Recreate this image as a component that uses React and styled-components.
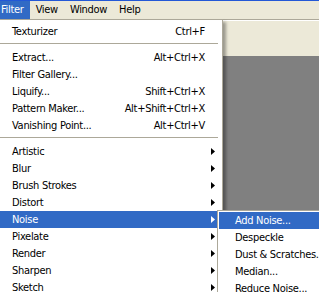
import React from "react";
import styled, { createGlobalStyle } from "styled-components";

const Global = createGlobalStyle`
  html, body { margin: 0; padding: 0; overflow: hidden; }
  body {
    width: 319px; height: 292px;
    background: #ece9d8;
    font-family: "DejaVu Sans Condensed", "DejaVu Sans", sans-serif;
    font-size: 11px;
    letter-spacing: -0.3px;
    color: #000;
  }
`;

const Screen = styled.div`
  position: relative;
  width: 319px;
  height: 292px;
  overflow: hidden;
  border-top: 1px solid #2358d6;
  box-sizing: border-box;
  display: flex;
  flex-direction: column;
`;

const MenuBar = styled.div`
  display: flex;
  height: 18px;
  margin-left: -5px;
  background: #ece9d8;
`;

const BarItem = styled.div`
  display: flex;
  align-items: center;
  padding: 0 6px;
  height: 18px;
  background: ${(p) => (p.$active ? "#316ac5" : "transparent")};
  color: ${(p) => (p.$active ? "#fff" : "#000")};
  line-height: 18px;
`;

const OptionsBar = styled.div`
  height: 36px;
  border-top: 1px solid #aca899;
  box-shadow: inset 0 1px 0 #fff;
  background: #ece9d8;
`;

const Canvas = styled.div`
  flex: 1;
  background: #808080;
`;

const Dropdown = styled.div`
  position: absolute;
  top: 18px;
  left: -3px;
  width: 226px;
  box-sizing: border-box;
  background: #fff;
  border: 1px solid #aca899;
  padding: 3px 0 3px;
  box-shadow: 3px 3px 3px rgba(0, 0, 0, 0.35);
`;

const Row = styled.div`
  display: grid;
  grid-template-columns: 1fr auto 17px;
  align-items: center;
  height: 17px;
  padding-left: 14px;
  background: ${(p) => (p.$active ? "#316ac5" : "transparent")};
  color: ${(p) => (p.$active ? "#fff" : "#000")};
  white-space: nowrap;
`;

const Shortcut = styled.span`
  text-align: right;
`;

const ArrowCell = styled.span`
  display: flex;
  align-items: center;
  padding-left: 6px;
`;

const Separator = styled.div`
  height: 9px;
  display: flex;
  align-items: flex-start;
  padding: 3px 4px 0 0;
  box-sizing: border-box;
  &::after {
    content: "";
    flex: 1;
    height: 1px;
    background: #aca899;
  }
`;

const Submenu = styled.div`
  position: absolute;
  top: 209px;
  left: 217px;
  width: 130px;
  box-sizing: border-box;
  background: #fff;
  border: 1px solid #aca899;
  padding: 1px;
`;

const SubRow = styled.div`
  height: 17px;
  display: flex;
  align-items: center;
  padding-left: 16px;
  background: ${(p) => (p.$active ? "#316ac5" : "transparent")};
  color: ${(p) => (p.$active ? "#fff" : "#000")};
  white-space: nowrap;
`;

const Arrow = ({ color }) => (
  <svg width="4" height="7" viewBox="0 0 4 7">
    <path d="M0 0 L4 3.5 L0 7 Z" fill={color} />
  </svg>
);

const groups = [
  [{ label: "Texturizer", sc: "Ctrl+F" }],
  [
    { label: "Extract...", sc: "Alt+Ctrl+X" },
    { label: "Filter Gallery..." },
    { label: "Liquify...", sc: "Shift+Ctrl+X" },
    { label: "Pattern Maker...", sc: "Alt+Shift+Ctrl+X" },
    { label: "Vanishing Point...", sc: "Alt+Ctrl+V" },
  ],
  [
    { label: "Artistic", sub: true },
    { label: "Blur", sub: true },
    { label: "Brush Strokes", sub: true },
    { label: "Distort", sub: true },
    { label: "Noise", sub: true, active: true },
    { label: "Pixelate", sub: true },
    { label: "Render", sub: true },
    { label: "Sharpen", sub: true },
    { label: "Sketch", sub: true },
  ],
];

const subItems = ["Add Noise...", "Despeckle", "Dust & Scratches...", "Median...", "Reduce Noise..."];

export default function App() {
  return (
    <>
      <Global />
      <Screen>
        <MenuBar>
          <BarItem $active>Filter</BarItem>
          <BarItem>View</BarItem>
          <BarItem>Window</BarItem>
          <BarItem>Help</BarItem>
        </MenuBar>
        <OptionsBar />
        <Canvas />
        <Dropdown>
          {groups.map((g, gi) => (
            <React.Fragment key={gi}>
              {gi > 0 && <Separator />}
              {g.map((it) => (
                <Row key={it.label} $active={it.active}>
                  <span>{it.label}</span>
                  <Shortcut>{it.sc || ""}</Shortcut>
                  <ArrowCell>{it.sub && <Arrow color={it.active ? "#fff" : "#000"} />}</ArrowCell>
                </Row>
              ))}
            </React.Fragment>
          ))}
        </Dropdown>
        <Submenu>
          {subItems.map((s, i) => (
            <SubRow key={s} $active={i === 0}>{s}</SubRow>
          ))}
        </Submenu>
      </Screen>
    </>
  );
}
